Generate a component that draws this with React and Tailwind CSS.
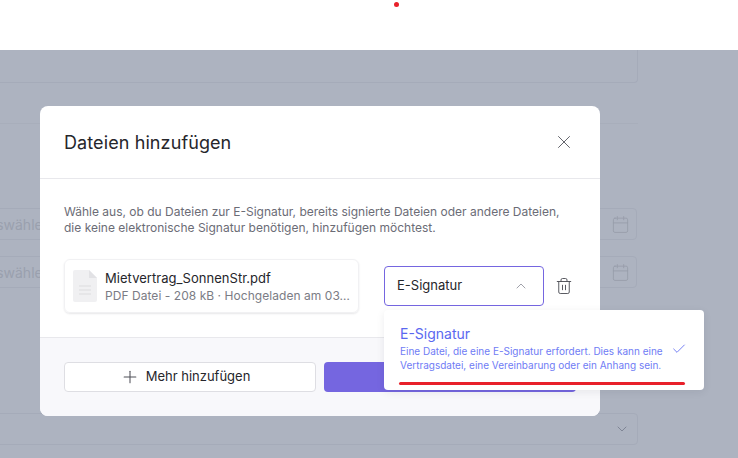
import React from 'react';
import { X, Plus, ChevronUp, ChevronDown, Check, Trash2, Calendar } from 'lucide-react';

const DateField = ({ className }) => (
  <div className={`h-[32px] w-[718px] -ml-[81px] border border-[#a5abb9] rounded flex items-center justify-between pl-[13px] pr-[6px] shrink-0 ${className}`}>
    <span className="text-[14px] text-[#9aa0ae]">Datum auswählen</span>
    <Calendar className="w-[19px] h-[19px] text-[#979daa]" strokeWidth={1.1} />
  </div>
);

const FileIcon = () => (
  <svg width="24" height="32" viewBox="0 0 24 32" className="shrink-0">
    <path d="M2 0h14l8 8v22a2 2 0 0 1-2 2H2a2 2 0 0 1-2-2V2a2 2 0 0 1 2-2z" fill="#f0f0f2" />
    <path d="M16 0l8 8h-8z" fill="#e2e2e5" />
    <path d="M6 16h12M6 20h12M6 24h12" stroke="#e2e2e5" strokeWidth="1.5" />
  </svg>
);

export default function App() {
  return (
    <div className="relative w-[738px] h-[458px] overflow-hidden bg-white font-['Inter',sans-serif]">
      <div className="h-[50px] bg-white flex justify-center">
        <div className="w-[5px] h-[5px] rounded-full bg-[#e8202a] mt-[2px] ml-[54px]" />
      </div>

      {/* abgedunkelte Seite */}
      <div className="h-[408px] bg-[#adb3c0] flex flex-col overflow-hidden">
        <div className="h-[33px] w-[651px] -ml-[13px] border border-t-0 border-[#a5abb9] rounded-b shrink-0" />
        <div className="h-px w-[638px] bg-[#a8aebb] mt-[40px] shrink-0" />
        <DateField className="mt-[84px]" />
        <DateField className="mt-[16px]" />
        <div className="mt-[125px] h-[32px] w-[651px] -ml-[13px] border border-[#a5abb9] rounded flex items-center justify-end pr-[7px] shrink-0">
          <ChevronDown className="w-[16px] h-[16px] text-[#7f8595]" strokeWidth={1.5} />
        </div>
      </div>

      {/* Dialog */}
      <div className="absolute left-[40px] top-[106px] w-[560px] h-[310px] bg-white rounded-lg overflow-hidden flex flex-col">
        <div className="h-[73px] border-b border-[#e8e8ec] flex items-center justify-between pl-[24px] pr-[25px] shrink-0">
          <h2 className="text-[18px] font-normal text-[#26262b] tracking-[0.1px]">Dateien hinzufügen</h2>
          <X className="w-[22px] h-[22px] text-[#55565e]" strokeWidth={1} />
        </div>

        <div className="flex-1 px-[24px] pt-[25px]">
          <p className="text-[12px] leading-[16px] text-[#6b6c76] whitespace-nowrap">
            Wähle aus, ob du Dateien zur E-Signatur, bereits signierte Dateien oder andere Dateien,
            <br />
            die keine elektronische Signatur benötigen, hinzufügen möchtest.
          </p>
          <div className="flex items-center mt-[23px]">
            <div className="w-[295px] h-[54px] rounded-md border border-[#f1f1f3] shadow-[0_1px_2px_rgba(20,20,40,0.1)] flex items-center gap-[8px] pl-[8px] pr-[8px] shrink-0">
              <FileIcon />
              <div className="min-w-0">
                <div className="text-[13px] leading-[18px] tracking-[0.04px] text-[#26262b] truncate">Mietvertrag_SonnenStr.pdf</div>
                <div className="text-[12px] leading-[17px] tracking-[0.05px] text-[#7b7c85] truncate">PDF Datei - 208 kB · Hochgeladen am 03.02.2023</div>
              </div>
            </div>
            <div className="ml-[25px] w-[160px] h-[40px] rounded border border-[#7566e0] flex items-center justify-between pl-[12px] pr-[14px] shrink-0">
              <span className="text-[13px] text-[#26262b]">E-Signatur</span>
              <ChevronUp className="w-[16px] h-[16px] text-[#a0a1aa]" strokeWidth={1.5} />
            </div>
            <Trash2 className="ml-[11px] w-[18px] h-[18px] text-[#4f5058]" strokeWidth={1.25} />
          </div>
        </div>

        <div className="h-[79px] bg-[#f8f8fb] border-t border-[#e8e8ec] flex gap-[8px] px-[24px] pt-[24px] shrink-0">
          <button className="w-[252px] h-[30px] bg-white border border-[#dedee3] rounded flex items-center justify-center gap-[6px] pr-[10px] text-[13px] text-[#26262b]">
            <Plus className="w-[20px] h-[20px] text-[#4f5058]" strokeWidth={1.25} />
            Mehr hinzufügen
          </button>
          <button className="w-[252px] h-[30px] bg-[#7566e0] rounded" />
        </div>
      </div>

      {/* Dropdown */}
      <div className="absolute left-[384px] top-[310px] w-[320px] h-[80px] bg-white rounded shadow-[0_2px_8px_rgba(20,20,40,0.08)] pl-[16px] pr-[17px] pt-[15px]">
        <div className="flex items-center justify-between">
          <div>
            <div className="text-[14px] leading-[18px] text-[#5a68f0]">E-Signatur</div>
            <div className="text-[10px] leading-[14px] text-[#6f7cf5] mt-[1px]">
              Eine Datei, die eine E-Signatur erfordert. Dies kann eine
              <br />
              Vertragsdatei, eine Vereinbarung oder ein Anhang sein.
            </div>
          </div>
          <Check className="w-[16px] h-[16px] text-[#5a68f0]" strokeWidth={1.25} />
        </div>
        <div className="h-[3px] w-[286px] -ml-[1px] mt-[10px] rounded-full bg-[#e8202a]" />
      </div>
    </div>
  );
}
